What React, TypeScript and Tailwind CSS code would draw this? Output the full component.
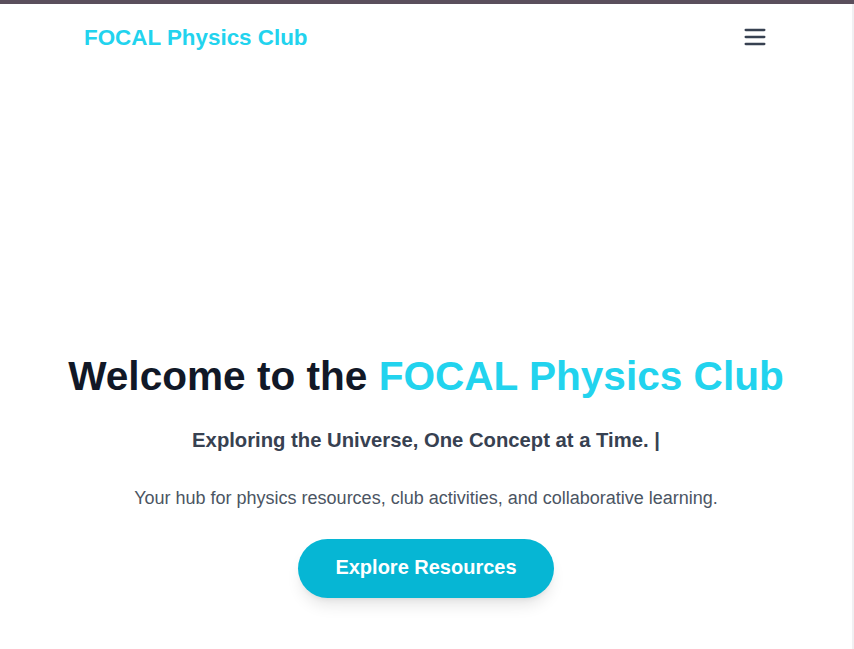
const MenuIcon = () => (
  <svg width="28" height="28" viewBox="0 0 24 24" fill="none" stroke="currentColor" strokeWidth="2" strokeLinecap="round">
    <line x1="4" y1="6" x2="20" y2="6" />
    <line x1="4" y1="12" x2="20" y2="12" />
    <line x1="4" y1="18" x2="20" y2="18" />
  </svg>
);

export default function App() {
  return (
    <div className="min-h-[649px] w-[854px] bg-white border-t-4 border-[#5a4f5c] font-['Liberation_Sans',Arial,sans-serif]">
      <div className="w-[852px] min-h-[645px] border-r-2 border-[#f0f0f2] box-content">
        <nav className="h-[66px] flex items-center justify-between pl-[84px] pr-[87px]">
          <a href="#" className="text-[22.4px] font-bold text-[#22d3ee] leading-8 pt-px">
            FOCAL Physics Club
          </a>
          <button className="text-[#374151] -mr-1">
            <MenuIcon />
          </button>
        </nav>

        <section className="pt-[282px] pb-12 flex flex-col items-center text-center px-4">
          <h1 className="text-[40.6px] leading-[48px] font-bold text-[#111827]">
            Welcome to the <span className="text-[#22d3ee]">FOCAL Physics Club</span>
          </h1>
          <p className="mt-[26px] text-[20.25px] leading-7 font-bold text-[#374151]">
            Exploring the Universe, One Concept at a Time. |
          </p>
          <p className="mt-[30px] text-lg leading-7 text-[#4b5563]">
            Your hub for physics resources, club activities, and collaborative learning.
          </p>
          <button className="mt-[27px] h-[59px] px-[37px] pb-[4px] rounded-full bg-[#06b6d4] text-white text-xl font-bold shadow-lg">
            Explore Resources
          </button>
        </section>
      </div>
    </div>
  );
}
